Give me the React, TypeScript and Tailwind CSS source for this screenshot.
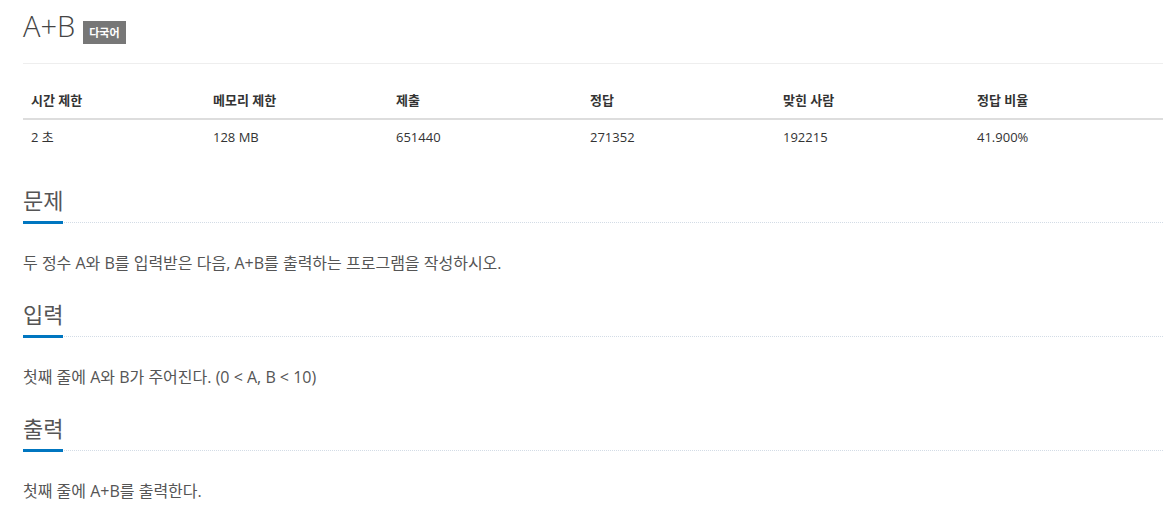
import React from 'react';

const FONT = "font-['Open_Sans','Noto_Sans_CJK_KR',sans-serif]";

const stats = [
  { label: '시간 제한', value: '2 초', w: 'w-[182px]' },
  { label: '메모리 제한', value: '128 MB', w: 'w-[183px]' },
  { label: '제출', value: '651440', w: 'w-[194px]' },
  { label: '정답', value: '271352', w: 'w-[193px]' },
  { label: '맞힌 사람', value: '192215', w: 'w-[194px]' },
  { label: '정답 비율', value: '41.900%', w: 'w-[194px]' },
];

const sections = [
  { title: '문제', body: '두 정수 A와 B를 입력받은 다음, A+B를 출력하는 프로그램을 작성하시오.' },
  { title: '입력', body: '첫째 줄에 A와 B가 주어진다. (0 < A, B < 10)' },
  { title: '출력', body: '첫째 줄에 A+B를 출력한다.' },
];

const Section: React.FC<{ title: string; body: string }> = ({ title, body }) => (
  <section className="mb-[24px]">
    <div className="flex border-b border-dotted border-[#d3dce6]">
      <h2 className="block text-[22px] leading-[30px] text-[#555] pb-[6px] border-b-[3px] border-[#0076c0] mb-[-2px] font-normal">
        {title}
      </h2>
    </div>
    <p className="mt-[28px] text-[16px] leading-[24px] text-[#555]">{body}</p>
  </section>
);

export default function App() {
  return (
    <div className={`${FONT} bg-white min-h-[517px] pl-[23px]`}>
      <div className="w-[1140px]">
        <div className="flex items-start h-[64px] pt-[10px] border-b border-[#eee]">
          <h1 className="text-[29px] leading-[31px] font-light text-[#444]">A+B</h1>
          <span className="ml-[8px] mt-[11px] h-[23px] px-[6px] bg-[#777] text-white text-[11px] font-bold leading-[23px]">
            다국어
          </span>
        </div>

        <table className="mt-[19px] w-[1140px] table-fixed border-collapse text-[13px] leading-[1.42857] text-[#333]">
          <thead>
            <tr className="border-b-2 border-[#ddd]">
              {stats.map(s => (
                <th key={s.label} className={`${s.w} p-2 text-left font-bold`}>{s.label}</th>
              ))}
            </tr>
          </thead>
          <tbody>
            <tr>
              {stats.map(s => (
                <td key={s.label} className="p-2">{s.value}</td>
              ))}
            </tr>
          </tbody>
        </table>

        <div className="mt-[31px]">
          {sections.map(s => (
            <Section key={s.title} title={s.title} body={s.body} />
          ))}
        </div>
      </div>
    </div>
  );
}
